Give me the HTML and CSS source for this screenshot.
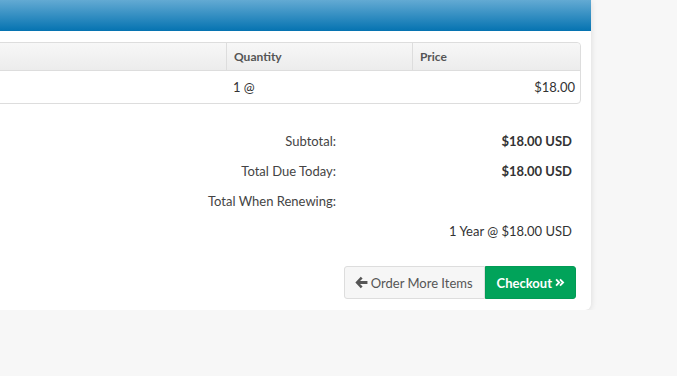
FILE: index.html
```html
<!DOCTYPE html>
<html lang="en">
<head>
    <meta charset="UTF-8">
    <meta name="viewport" content="width=device-width, initial-scale=1.0">
    <title>Shopping Cart</title>
    <link rel="stylesheet" href="styles.css">
</head>
<body>
    <div class="cart">
        <div class="cart-header"></div>
        <div class="cart-body">
            <table class="items">
                <thead>
                    <tr>
                        <th class="col-desc"></th>
                        <th class="col-qty">Quantity</th>
                        <th class="col-price">Price</th>
                    </tr>
                </thead>
                <tbody>
                    <tr>
                        <td></td>
                        <td>1 @</td>
                        <td class="amount">$18.00</td>
                    </tr>
                </tbody>
            </table>

            <div class="totals">
                <div class="label">Subtotal:</div>
                <div class="value strong">$18.00 USD</div>
                <div class="label">Total Due Today:</div>
                <div class="value strong">$18.00 USD</div>
                <div class="label">Total When Renewing:</div>
                <div class="value"></div>
                <div class="label"></div>
                <div class="value">1 Year @ $18.00 USD</div>
            </div>

            <div class="actions">
                <button type="button" class="btn btn-default">
                    <svg class="icon" viewBox="0 0 14 14" width="13" height="13"><path d="M6.2 0.8 8.2 2.8 5.4 5.5H13.4v3H5.4l2.8 2.7-2 2L0.4 7z" fill="#555"/></svg>Order More Items
                </button>
                <button type="button" class="btn btn-success">
                    Checkout<svg class="icon" viewBox="0 0 12 12" width="10" height="11"><path d="M1.3 2.3 5 6 1.3 9.7M6 2.3 9.7 6 6 9.7" fill="none" stroke="#fff" stroke-width="2.2"/></svg>
                </button>
            </div>
        </div>
    </div>
</body>
</html>
```

FILE: styles.css
```css
body {
    font-family: "Lato", "Liberation Sans", sans-serif;
    margin: 0;
    padding: 0;
    background-color: #f7f7f7;
    color: #333;
    font-size: 13px;
    overflow: hidden;
}
.cart {
    width: 891px;
    margin-left: -300px;
    background: #fff;
    border-radius: 0 0 6px 6px;
    box-shadow: 0 1px 6px rgba(0, 0, 0, 0.12);
}
.cart-header {
    height: 31px;
    background: linear-gradient(to bottom, #63aad3, #0573b1);
}
.cart-body {
    padding: 11px 10px 11px 0;
}
.items {
    width: 881px;
    table-layout: fixed;
    border-collapse: separate;
    border-spacing: 0;
    border: 1px solid #ddd;
    border-radius: 0 4px 4px 0;
}
.items th {
    box-sizing: border-box;
    height: 28px;
    padding: 0 7px;
    text-align: left;
    font-size: 12px;
    font-weight: bold;
    color: #555;
    background: linear-gradient(to bottom, #f7f7f7, #ececec);
    border-bottom: 1px solid #ddd;
    border-left: 1px solid #ddd;
}
.items th:first-child {
    border-left: none;
}
.items th:last-child {
    border-top-right-radius: 4px;
}
.col-desc { width: 525px; }
.col-qty { width: 186px; }
.items td {
    height: 32px;
    padding: 0 7px;
    vertical-align: top;
    line-height: 32px;
}
.amount {
    text-align: right;
    padding-right: 5px !important;
}
.totals {
    display: grid;
    grid-template-columns: 1fr 236px;
    margin-top: 22px;
    padding-right: 9px;
}
.totals > div {
    height: 30px;
    line-height: 30px;
    text-align: right;
}
.totals .label {
    color: #444;
}
.strong {
    font-weight: bold;
}
.actions {
    display: flex;
    justify-content: flex-end;
    margin-top: 20px;
    padding-right: 5px;
}
.btn {
    height: 33px;
    font-family: inherit;
    font-size: 13px;
    display: flex;
    align-items: center;
    gap: 3px;
    cursor: pointer;
}
.btn-default {
    padding: 0 11px 0 10px;
    background: #f6f6f6;
    border: 1px solid #ddd;
    color: #555;
    border-radius: 3px 0 0 3px;
}
.btn-success {
    background: #01a35a;
    border: 1px solid #029b55;
    color: #fff;
    font-weight: bold;
    padding: 0 10px 0 11px;
    border-radius: 0 3px 3px 0;
}
```
